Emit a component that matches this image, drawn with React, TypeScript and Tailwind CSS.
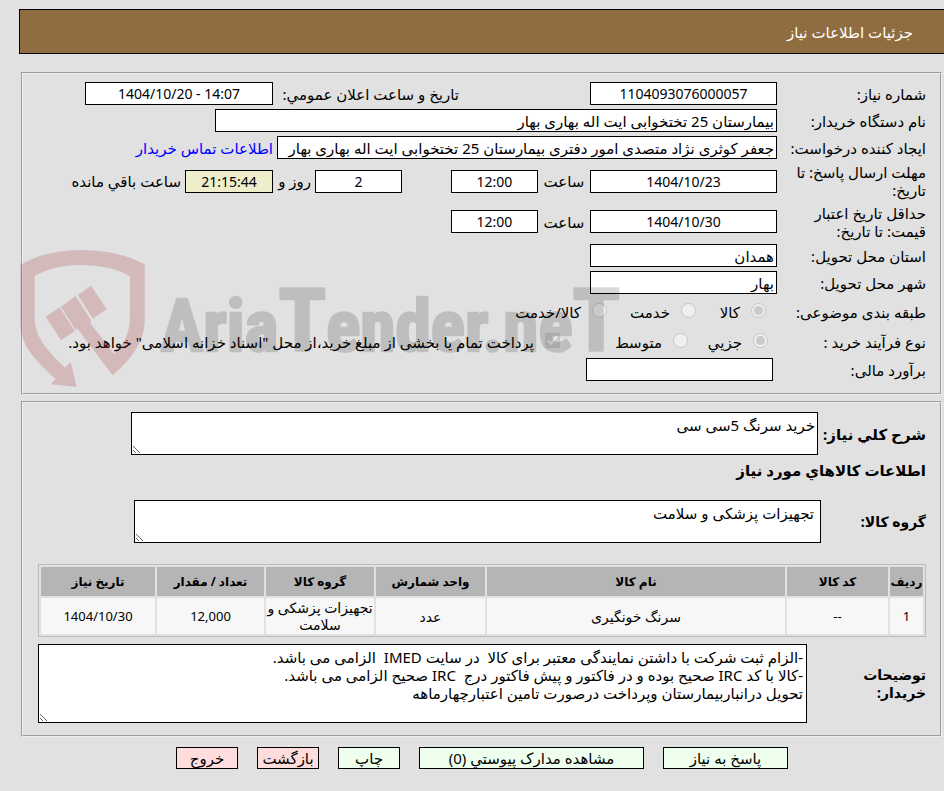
import type { ReactNode } from "react";
import clsx from "clsx";

interface FieldProps {
    id: string;
    value: string;
    label?: string;
    numeric?: boolean;
    className?: string;
}

function Field({ id, value, label, numeric, className }: FieldProps) {
    return (
        <input
            id={id}
            type="text"
            readOnly
            dir={numeric ? "ltr" : undefined}
            aria-label={label}
            defaultValue={value}
            className={clsx("h-[23px] shrink-0 border border-black px-0.5", numeric && "text-center text-[14px]", className)}
        />
    );
}

interface RowProps {
    label: ReactNode;
    htmlFor?: string;
    className?: string;
    children: ReactNode;
}

function Row({ label, htmlFor, className, children }: RowProps) {
    return (
        <div className={clsx("flex items-center", className ?? "h-[27px]")}>
            <label htmlFor={htmlFor} className="w-[149px] shrink-0 whitespace-nowrap">
                {label}
            </label>
            {children}
        </div>
    );
}

interface ChoiceProps {
    type: "radio" | "checkbox";
    name: string;
    label: string;
    checked?: boolean;
    className?: string;
}

function Choice({ type, name, label, checked, className }: ChoiceProps) {
    return (
        <label className={clsx("flex shrink-0 items-center whitespace-nowrap", className)}>
            <input type={type} name={name} defaultChecked={checked} disabled className="mb-1 size-[15px] shrink-0" />
            {label}
        </label>
    );
}

function Watermark() {
    return (
        <svg
            viewBox="60 150 1800 414"
            direction="ltr"
            className="pointer-events-none absolute top-44 -left-[3px] h-[138px] w-[600px]"
            aria-hidden="true"
        >
            <g fill="#a02020" opacity="0.2">
                <path d="M61 195Q135 150 245 150Q355 150 434 193V360C434 430 385 485 338 526L233 387L225 388L183 320L227 288L273 360L271 370L342 462C375 430 390 395 390 350V228Q330 195 245 195Q160 195 104 228V350C104 410 140 450 195 503L212 485L230 561L152 553L167 537C100 475 61 435 61 365Z" />
                <path d="M137 350L179 322L224 393L183 421Z" />
                <path d="M233 285L273 257L320 327L279 356Z" />
            </g>
            <g opacity="0.15">
                <text
                    x="482"
                    y="452"
                    fill="#000"
                    stroke="#000"
                    strokeWidth="8"
                    strokeLinejoin="round"
                    fontSize="214"
                    fontWeight="700"
                    className="font-['Roboto_Condensed','Roboto',sans-serif]"
                >
                    Aria<tspan fontSize="264">T</tspan>ender.ne<tspan fontSize="264">T</tspan>
                </text>
            </g>
        </svg>
    );
}

const columns = [
    { title: "ردیف", value: "1", width: "w-[33px]", numeric: true },
    { title: "کد کالا", value: "--", width: "w-[101px]", numeric: true },
    { title: "نام کالا", value: "سرنگ خونگیری", width: "" },
    { title: "واحد شمارش", value: "عدد", width: "w-[109px]" },
    { title: "گروه کالا", value: "تجهیزات پزشکی و سلامت", width: "w-[108px]" },
    { title: "تعداد / مقدار", value: "12,000", width: "w-[107px]", numeric: true },
    { title: "تاریخ نیاز", value: "1404/10/30", width: "w-[114px]", numeric: true },
];

const actions = [
    { label: "پاسخ به نیاز", className: "w-[125px] bg-[#eeffee]" },
    { label: "مشاهده مدارک پیوستي (0)", className: "w-[225px] bg-[#eeffee]" },
    { label: "چاپ", className: "w-[62px] bg-[#eeffee]" },
    { label: "بازگشت", className: "w-[62px] bg-[#ffdddd]" },
    { label: "خروج", className: "w-[62px] bg-[#ffdddd]" },
];

const notes = `-الزام ثبت شرکت با داشتن نمایندگی معتبر برای کالا  در سایت IMED  الزامی می باشد.
-کالا با کد IRC صحیح بوده و در فاکتور و پیش فاکتور درج  IRC صحیح الزامی می باشد.
تحویل درانباربیمارستان وپرداخت درصورت تامین اعتبارچهارماهه`;

export default function App() {
    return (
        <div
            dir="rtl"
            className="min-h-screen bg-[#e1e1e1] pt-[9px] pb-[22px] font-['Noto_Sans','DejaVu_Sans',sans-serif] text-[15px] leading-[18px] text-black [&_input[type=text]]:bg-white [&_textarea]:bg-white"
        >
            <header className="ml-[19px] flex h-[45px] items-center border-y border-l border-black bg-[#8f6d40] pr-[31px] text-white">
                <h1>جزئیات اطلاعات نیاز</h1>
            </header>

            <main className="mt-[18px] mr-0.5 ml-[21px]">
                <fieldset className="relative border-2 border-[#f0f0f0] pt-1.5 pr-3.5 pb-2.5 [border-style:groove]">
                    <Row label="شماره نیاز:" htmlFor="need-no">
                        <Field id="need-no" value="1104093076000057" numeric className="w-[187px]" />
                        <label htmlFor="announce" className="mr-[131px] w-[186px] shrink-0 whitespace-nowrap">
                            تاریخ و ساعت اعلان عمومي:
                        </label>
                        <Field id="announce" value="1404/10/20 - 14:07" numeric className="w-[188px]" />
                    </Row>
                    <Row label="نام دستگاه خریدار:" htmlFor="buyer">
                        <Field id="buyer" value="بیمارستان 25 تختخوابی ایت اله بهاری بهار" className="w-[562px]" />
                    </Row>
                    <Row label="ایجاد کننده درخواست:" htmlFor="creator">
                        <Field
                            id="creator"
                            value="جعفر کوثری نژاد متصدی امور دفتری بیمارستان 25 تختخوابی ایت اله بهاری بهار"
                            className="w-[500px]"
                        />
                        <a href="#contact" className="mr-1 whitespace-nowrap text-[#0000ff]">
                            اطلاعات تماس خریدار
                        </a>
                    </Row>
                    <Row
                        className="h-10"
                        htmlFor="reply-date"
                        label={
                            <>
                                مهلت ارسال پاسخ: تا
                                <br />
                                تاریخ:
                            </>
                        }
                    >
                        <Field id="reply-date" value="1404/10/23" numeric className="w-[187px]" />
                        <label htmlFor="reply-time" className="w-[52px] shrink-0 text-center">
                            ساعت
                        </label>
                        <Field id="reply-time" value="12:00" numeric className="w-[87px]" />
                        <Field id="days" value="2" label="روز" numeric className="mr-[49px] w-[87px]" />
                        <label htmlFor="remaining" className="w-[42px] shrink-0 pr-1 whitespace-nowrap">
                            روز و
                        </label>
                        <Field id="remaining" value="21:15:44" numeric className="w-[88px] bg-[#eeeecc]!" />
                        <span className="mr-1 whitespace-nowrap">ساعت باقي مانده</span>
                    </Row>
                    <Row
                        className="h-[41px]"
                        htmlFor="price-date"
                        label={
                            <>
                                حداقل تاریخ اعتبار
                                <br />
                                قیمت: تا تاریخ:
                            </>
                        }
                    >
                        <Field id="price-date" value="1404/10/30" numeric className="w-[187px]" />
                        <label htmlFor="price-time" className="w-[52px] shrink-0 text-center">
                            ساعت
                        </label>
                        <Field id="price-time" value="12:00" numeric className="w-[87px]" />
                    </Row>
                    <Row label="استان محل تحویل:" htmlFor="province">
                        <Field id="province" value="همدان" className="w-[187px]" />
                    </Row>
                    <Row label="شهر محل تحویل:" htmlFor="city">
                        <Field id="city" value="بهار" className="w-[187px]" />
                    </Row>
                    <Row label="طبقه بندی موضوعی:" className="h-8">
                        <Choice type="radio" name="category" label="کالا" checked className="mr-[11px] w-[70px] gap-[11px]" />
                        <Choice type="radio" name="category" label="خدمت" className="w-[89px] gap-[11px]" />
                        <Choice type="radio" name="category" label="کالا/خدمت" className="gap-[11px]" />
                    </Row>
                    <Row label="نوع فرآیند خرید :" className="h-7">
                        <Choice type="radio" name="process" label="جزیي" checked className="mr-[9px] w-20 gap-[11px]" />
                        <Choice type="radio" name="process" label="متوسط" className="w-32 gap-[11px]" />
                        <Choice
                            type="checkbox"
                            name="treasury"
                            checked
                            className="gap-[11px]"
                            label={'پرداخت تمام یا بخشی از مبلغ خرید،از محل "اسناد خزانه اسلامی" خواهد بود.'}
                        />
                    </Row>
                    <Row label="برآورد مالی:" htmlFor="estimate">
                        <Field id="estimate" value="" className="mr-1 w-[187px]" />
                    </Row>
                    <Watermark />
                </fieldset>

                <fieldset className="mt-1.5 border-2 border-[#f0f0f0] pt-[9px] pr-3.5 pb-3 pl-[15px] [border-style:groove]">
                    <div className="flex items-center pl-[93px]">
                        <label htmlFor="summary" className="w-[108px] shrink-0 font-bold whitespace-nowrap">
                            شرح كلي نیاز:
                        </label>
                        <textarea
                            id="summary"
                            readOnly
                            defaultValue="خرید سرنگ 5سی سی"
                            className="h-[43px] min-w-0 flex-1 border border-black px-0.5 py-[3px]"
                        />
                    </div>
                    <h2 className="mt-1.5 font-bold">اطلاعات کالاهاي مورد نیاز</h2>
                    <div className="mt-[21px] flex items-center pl-24">
                        <label htmlFor="group" className="w-[105px] shrink-0 text-[14px] font-bold">
                            گروه کالا:
                        </label>
                        <textarea
                            id="group"
                            readOnly
                            defaultValue="تجهیزات پزشکی و سلامت"
                            className="h-[43px] min-w-0 flex-1 border border-black px-1.5 py-[3px]"
                        />
                    </div>

                    <table className="mt-[21px] w-full table-fixed border-separate border-spacing-0.5 border border-[#bbbbbb] text-center">
                        <thead>
                            <tr className="h-[29px] bg-[#b5b5b5] text-[12px]">
                                {columns.map((column) => (
                                    <th key={column.title} className={clsx("font-bold whitespace-nowrap", column.width)}>
                                        {column.title}
                                    </th>
                                ))}
                            </tr>
                        </thead>
                        <tbody>
                            <tr className="h-9 bg-[#f7f7f7] leading-[17px]">
                                {columns.map((column) => (
                                    <td key={column.title} className={column.numeric ? "text-[13px]" : "text-[14px]"}>
                                        {column.value}
                                    </td>
                                ))}
                            </tr>
                        </tbody>
                    </table>

                    <div className="mt-[7px] flex items-center">
                        <label htmlFor="notes" className="w-[119px] shrink-0 text-[14px] font-bold">
                            توضیحات
                            <br />
                            خریدار:
                        </label>
                        <textarea
                            id="notes"
                            readOnly
                            defaultValue={notes}
                            className="h-[79px] min-w-0 flex-1 border border-black px-[3px] py-[3px]"
                        />
                    </div>
                </fieldset>

                <div className="mt-2.5 flex gap-[19px] pr-[154px]">
                    {actions.map((action) => (
                        <button
                            key={action.label}
                            type="button"
                            className={clsx("h-[22px] shrink-0 border border-black whitespace-nowrap", action.className)}
                        >
                            {action.label}
                        </button>
                    ))}
                </div>
            </main>
        </div>
    );
}
